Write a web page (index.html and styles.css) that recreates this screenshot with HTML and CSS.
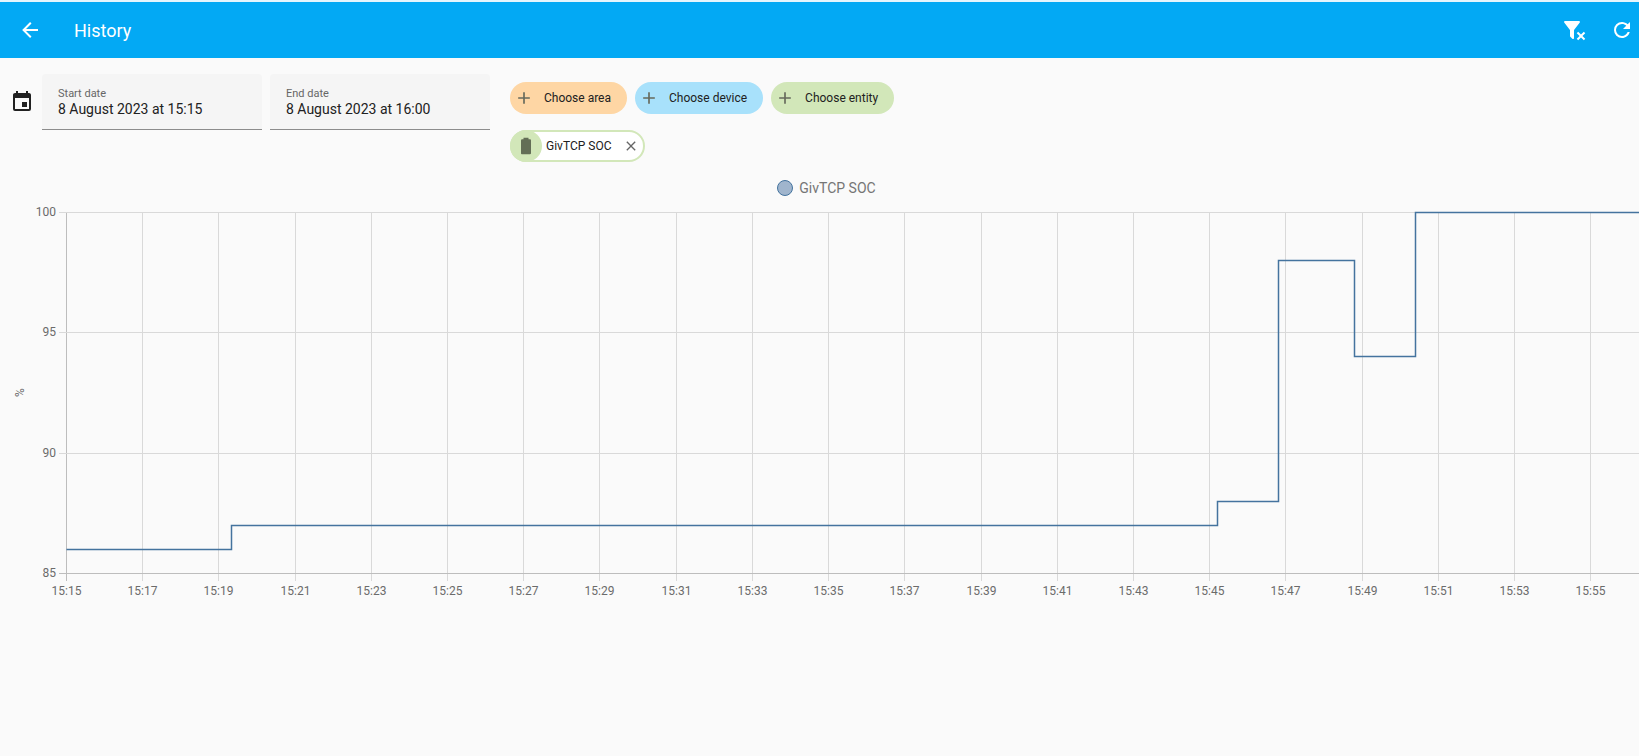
FILE: index.html
```
<!DOCTYPE html>
<html lang="en-GB">

<head>
    <meta charset="UTF-8">
    <meta name="viewport" content="width=device-width, initial-scale=1.0">
    <title>History</title>
    <link rel="stylesheet" href="styles.css">
</head>

<body>
    <header class="toolbar">
        <button class="icon-button" type="button" aria-label="Back">
            <svg class="icon" viewBox="0 0 24 24"><path d="M20,11V13H8L13.5,18.5L12.08,19.92L4.16,12L12.08,4.08L13.5,5.5L8,11H20Z"/></svg>
        </button>
        <h1 class="title">History</h1>
        <div class="actions">
            <button class="icon-button" type="button" aria-label="Remove all selections">
                <svg class="icon" viewBox="0 0 24 24"><path d="M14.76,20.83L17.6,18L14.76,15.17L16.17,13.76L19,16.57L21.83,13.76L23.24,15.17L20.43,18L23.24,20.83L21.83,22.24L19,19.4L16.17,22.24L14.76,20.83M12,12V19.88C12.04,20.18 11.94,20.5 11.71,20.71C11.32,21.1 10.69,21.1 10.3,20.71L8.29,18.7C8.06,18.47 7.96,18.16 8,17.87V12H7.97L2.21,4.62C1.87,4.19 1.95,3.56 2.38,3.22C2.57,3.08 2.78,3 3,3H17C17.22,3 17.43,3.08 17.62,3.22C18.05,3.56 18.13,4.19 17.79,4.62L12.03,12H12Z"/></svg>
            </button>
            <button class="icon-button" type="button" aria-label="Refresh">
                <svg class="icon" viewBox="0 0 24 24"><path d="M17.65,6.35C16.2,4.9 14.21,4 12,4A8,8 0 0,0 4,12A8,8 0 0,0 12,20C15.73,20 18.84,17.45 19.73,14H17.65C16.83,16.33 14.61,18 12,18A6,6 0 0,1 6,12A6,6 0 0,1 12,6C13.66,6 15.14,6.69 16.22,7.78L13,11H20V4L17.65,6.35Z"/></svg>
            </button>
        </div>
    </header>

    <main>
        <section class="filters">
            <div class="date-range">
                <svg class="icon calendar" viewBox="0 0 24 24"><path d="M19,19H5V8H19M16,1V3H8V1H6V3H5C3.89,3 3,3.89 3,5V19A2,2 0 0,0 5,21H19A2,2 0 0,0 21,19V5C21,3.89 20.1,3 19,3H18V1M17,12H12V17H17V12Z"/></svg>
                <div class="field">
                    <label for="start">Start date</label>
                    <input id="start" type="text" value="8 August 2023 at 15:15" readonly>
                </div>
                <div class="field">
                    <label for="end">End date</label>
                    <input id="end" type="text" value="8 August 2023 at 16:00" readonly>
                </div>
            </div>

            <div class="targets">
                <div class="chips">
                    <button class="chip area" type="button">
                        <svg class="chip-icon" viewBox="0 0 24 24"><path d="M19,13H13V19H11V13H5V11H11V5H13V11H19V13Z"/></svg>
                        Choose area
                    </button>
                    <button class="chip device" type="button">
                        <svg class="chip-icon" viewBox="0 0 24 24"><path d="M19,13H13V19H11V13H5V11H11V5H13V11H19V13Z"/></svg>
                        Choose device
                    </button>
                    <button class="chip entity" type="button">
                        <svg class="chip-icon" viewBox="0 0 24 24"><path d="M19,13H13V19H11V13H5V11H11V5H13V11H19V13Z"/></svg>
                        Choose entity
                    </button>
                </div>
                <div class="chips">
                    <div class="selected">
                        <span class="badge">
                            <svg class="chip-icon" viewBox="0 0 24 24"><path d="M16.67,4H15V2H9V4H7.33A1.33,1.33 0 0,0 6,5.33V20.67C6,21.4 6.6,22 7.33,22H16.67A1.33,1.33 0 0,0 18,20.67V5.33C18,4.6 17.4,4 16.67,4Z"/></svg>
                        </span>
                        <span>GivTCP SOC</span>
                        <button class="remove" type="button" aria-label="Remove GivTCP SOC">
                            <svg viewBox="0 0 24 24"><path d="M19,6.41L17.59,5L12,10.59L6.41,5L5,6.41L10.59,12L5,17.59L6.41,19L12,13.41L17.59,19L19,17.59L13.41,12L19,6.41Z"/></svg>
                        </button>
                    </div>
                </div>
            </div>
        </section>

        <section class="history">
            <div class="legend">
                <button class="legend-item" type="button"><span class="dot"></span>GivTCP SOC</button>
            </div>
            <svg class="chart" id="chart" role="img" aria-label="GivTCP SOC history"></svg>
        </section>
    </main>

    <script src="chart.js"></script>
</body>

</html>
```

FILE: styles.css
```
* {
    margin: 0;
    padding: 0;
    box-sizing: border-box;
}

body {
    font-family: Roboto, "Noto Sans", sans-serif;
    font-size: 14px;
    color: #212121;
    background-color: #fafafa;
    overflow-x: hidden;
}

button {
    border: none;
    background: none;
    font: inherit;
    color: inherit;
    cursor: pointer;
}

svg {
    display: block;
    fill: currentColor;
}

.icon {
    width: 24px;
    height: 24px;
    flex: none;
}

.toolbar {
    display: flex;
    align-items: center;
    height: 58px;
    padding: 0 5px 0 18px;
    border-top: 2px solid #e4f5fd;
    color: white;
    background-color: #03a9f4;
}

.title {
    flex: 1;
    margin-left: 32px;
    font-size: 18px;
    font-weight: 400;
}

.actions {
    display: flex;
    gap: 24px;
}

.filters {
    display: flex;
    align-items: flex-start;
    gap: 20px;
    padding: 16px 10px 0;
}

.date-range {
    display: flex;
    gap: 8px;
}

.calendar {
    margin-top: 16px;
}

.field {
    display: flex;
    flex-direction: column;
    width: 220px;
    height: 56px;
    padding: 12px 16px 0;
    border-bottom: 1px solid #8c8c8c;
    border-radius: 4px 4px 0 0;
    background-color: #f5f5f5;
}

.field label {
    font-size: 11px;
    line-height: 15px;
    color: #666;
}

.field input {
    width: 100%;
    border: none;
    outline: none;
    background: none;
    font: inherit;
    line-height: 16px;
    color: inherit;
}

.targets {
    display: flex;
    flex-direction: column;
    gap: 16px;
    padding-top: 8px;
}

.chips {
    display: flex;
    flex-wrap: wrap;
    gap: 8px;
}

.chip {
    display: flex;
    align-items: center;
    gap: 10px;
    height: 32px;
    padding: 0 16px 0 4px;
    border-radius: 16px;
    font-size: 12px;
}

.chip-icon {
    width: 20px;
    height: 20px;
    color: #666a5c;
}

.area {
    background-color: #fed6a4;
}

.device {
    background-color: #a8e1fb;
}

.entity {
    background-color: #d2e7b9;
}

.selected {
    display: flex;
    align-items: center;
    height: 32px;
    border: 2px solid #d2e7b9;
    border-radius: 16px;
    background-color: white;
    font-size: 12px;
}

.badge {
    display: flex;
    align-items: center;
    justify-content: center;
    width: 32px;
    height: 32px;
    margin: 0 4px 0 -2px;
    border-radius: 50%;
    background-color: #d2e7b9;
}

.badge .chip-icon {
    color: #636e56;
}

.remove {
    width: 16px;
    height: 16px;
    margin: 0 4px 0 12px;
    color: #666;
}

.history {
    padding-top: 16px;
}

.legend {
    display: flex;
    justify-content: center;
    padding-left: 14px;
}

.legend-item {
    display: flex;
    align-items: center;
    gap: 6px;
    line-height: 20px;
    color: #757575;
}

.dot {
    width: 16px;
    height: 16px;
    border: 1px solid #44739e;
    border-radius: 50%;
    background-color: #a0b5cd;
}

.chart {
    width: 100%;
    height: 410px;
}

.grid {
    stroke: #d9d9d9;
}

.axis {
    stroke: #bdbdbd;
}

.label {
    font-size: 12px;
    fill: #6b6b6b;
}

.series {
    fill: none;
    stroke: #44739e;
    stroke-width: 1.5;
}
```

FILE: chart.js
```
const chart = document.getElementById('chart')

// plot area inside the svg
const left = 66
const top_ = 14
const bottom = 375
const minutes = 41.28

// minutes after 15:15, state of charge
const points = [
    [0, 86],
    [4.32, 87],
    [30.2, 88],
    [31.8, 98],
    [33.8, 94],
    [35.4, 100]
]

function add(name, attrs, text) {
    const el = document.createElementNS('http://www.w3.org/2000/svg', name)
    for (const key in attrs) {
        el.setAttribute(key, attrs[key])
    }
    if (text) {
        el.textContent = text
    }
    chart.appendChild(el)
}

function draw() {
    const width = chart.clientWidth
    // half a pixel keeps the 1px lines sharp
    const x = m => Math.round(left + m * (width - left) / minutes) + 0.5
    const y = v => Math.round(bottom - (v - 85) * (bottom - top_) / 15) + 0.5

    chart.innerHTML = ''

    for (let m = 0; m < minutes; m += 2) {
        add('path', { class: m ? 'grid' : 'grid axis', d: `M${x(m)},${top_}V${bottom + 8}` })
        add('text', { class: 'label', x: x(m), y: bottom + 22, 'text-anchor': 'middle' }, '15:' + (15 + m))
    }

    for (let v = 85; v <= 100; v += 5) {
        add('path', { class: v > 85 ? 'grid' : 'grid axis', d: `M${left - 7},${y(v)}H${width}` })
        add('text', { class: 'label', x: left - 10, y: y(v) + 3, 'text-anchor': 'end' }, v)
    }

    const middle = (top_ + bottom) / 2
    add('text', { class: 'label', 'text-anchor': 'middle', transform: `translate(24 ${middle}) rotate(-90)` }, '%')

    let d = `M${x(0)},${y(points[0][1])}`
    for (let i = 1; i < points.length; i++) {
        d += `H${x(points[i][0])}V${y(points[i][1])}`
    }
    add('path', { class: 'series', d: d + `H${width}` })
}

draw()
window.addEventListener('resize', draw)
```
